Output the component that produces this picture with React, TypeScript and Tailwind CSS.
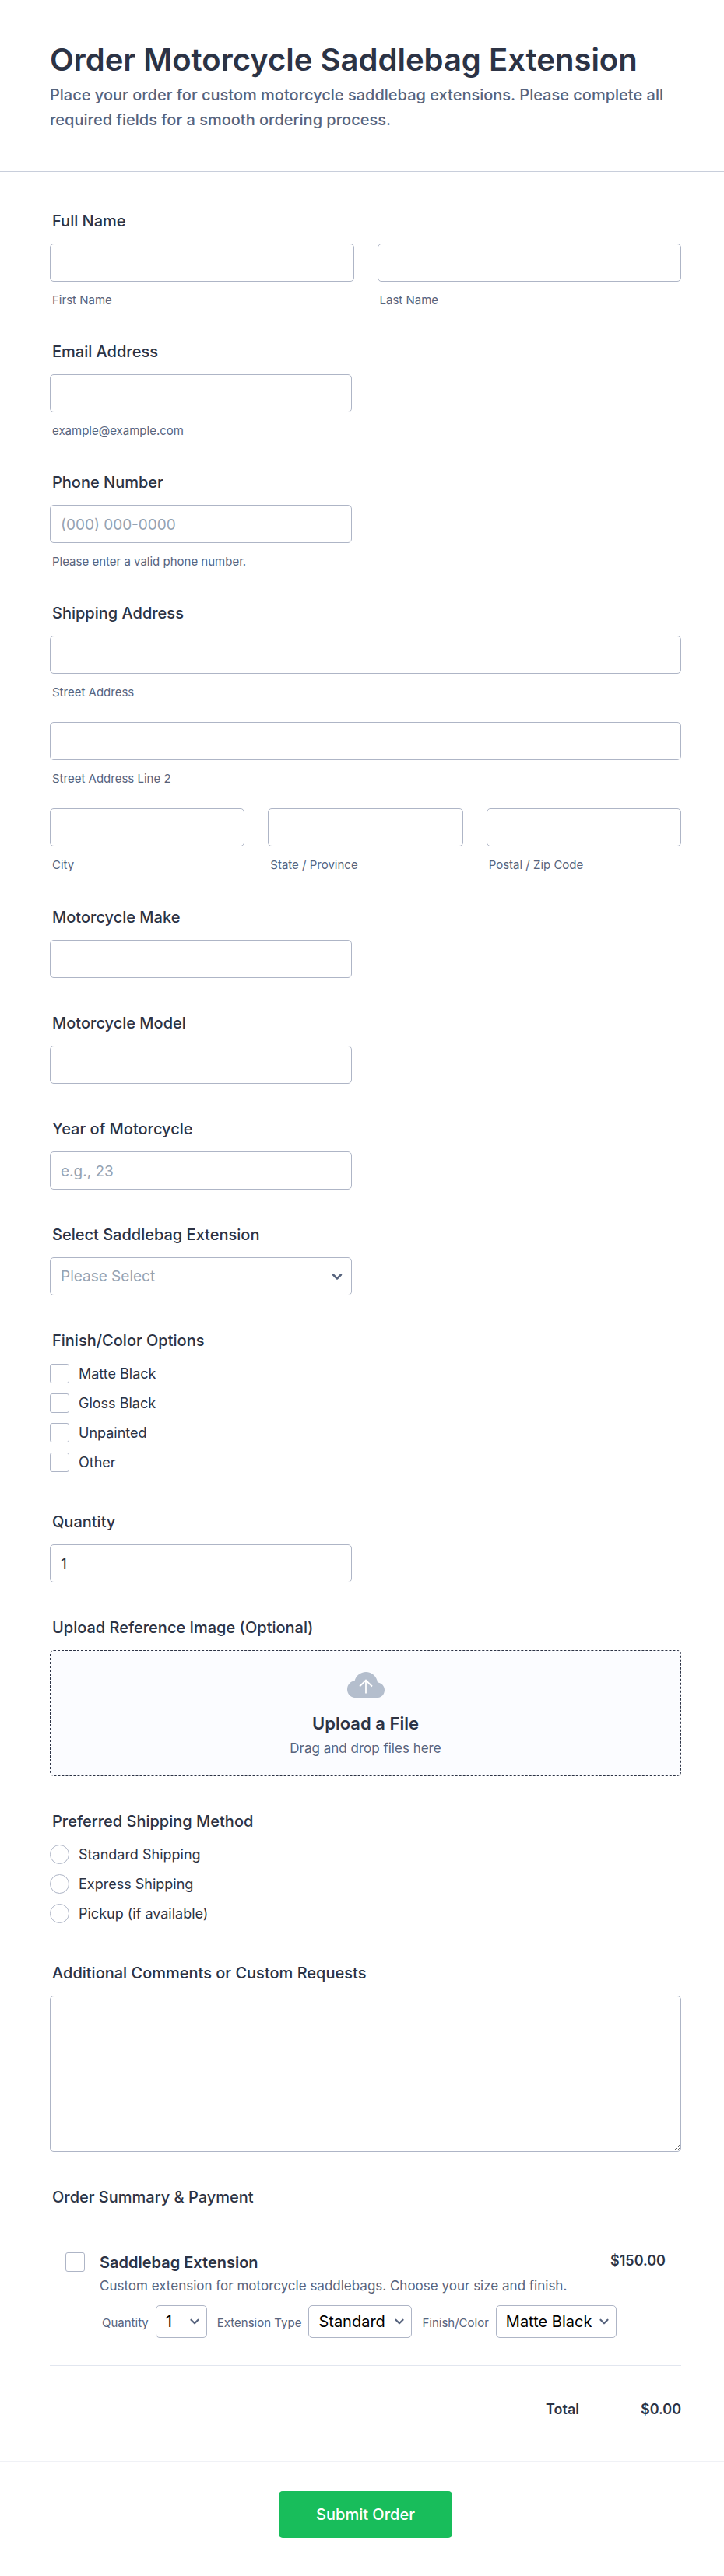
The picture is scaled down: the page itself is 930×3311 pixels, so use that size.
import React, { useState } from 'react';
import { ChevronDown } from 'lucide-react';

const FINISHES = ['Matte Black', 'Gloss Black', 'Unpainted', 'Other'];
const SHIPPING_METHODS = ['Standard Shipping', 'Express Shipping', 'Pickup (if available)'];
const UNIT_PRICE = 150;

const labelClass = 'block pl-[3px] text-[20px] leading-[25px] font-medium';
const subClass = 'mt-4 block pl-[3px] text-[15px] leading-4 text-[#57647e]';
const inputClass =
  'block h-[49px] w-full rounded-[5px] border border-[#aeb5c6] bg-white px-[13px] pt-px text-[19px] placeholder:text-[#95a3b3] outline-none focus:border-blue-500';
const boxClass = 'size-[25px] shrink-0 appearance-none border border-[#aeb5c6] bg-white checked:bg-blue-600';

type FieldProps = {
  id: string;
  label: string;
  sub?: string;
  children: React.ReactNode;
};

const Field: React.FC<FieldProps> = ({ id, label, sub, children }) => (
  <div className="flex flex-col">
    <label htmlFor={id} className={`${labelClass} mb-4`}>{label}</label>
    <div className="w-[388px] max-w-full">{children}</div>
    {sub && <p className={subClass}>{sub}</p>}
  </div>
);

const Group: React.FC<{ legend: string; children: React.ReactNode }> = ({ legend, children }) => (
  <fieldset>
    <legend className={`${labelClass} mb-4`}>{legend}</legend>
    {children}
  </fieldset>
);

const SubInput: React.FC<{ id: string; label: string }> = ({ id, label }) => (
  <div className="min-w-0 flex-1">
    <input id={id} name={id} type="text" className={inputClass} />
    <label htmlFor={id} className={subClass}>{label}</label>
  </div>
);

const ProductSelect: React.FC<{ id: string; label: string; options: string[]; width: string }> = ({ id, label, options, width }) => (
  <div className="flex items-center gap-[9px]">
    <label htmlFor={id} className="pt-1 text-[15px] leading-[18px] text-[#57647e]">{label}</label>
    <div className={`relative ${width}`}>
      <select id={id} name={id} className="block h-[42px] w-full appearance-none rounded-[5px] border border-[#aeb5c6] bg-white pl-3 text-[20px] text-black">
        {options.map(o => <option key={o}>{o}</option>)}
      </select>
      <ChevronDown className="pointer-events-none absolute top-3 right-[7px] size-[18px] text-[#57647e]" strokeWidth={3} />
    </div>
  </div>
);

const CloudIcon = () => (
  <svg width="48" height="33" viewBox="0 0 48 33" fill="none" aria-hidden="true">
    <path d="M9 33C4 32 0 28 0 22.500C0 16.500 4 12 9.500 11.500C11 5 17 0 24 0C31.500 0 38 5.500 39 13.500C44 14 48 18 48 23C48 28.500 44.500 32.500 39.500 33Z" fill="#b4becd" />
    <path d="M24 27.500V10.500M16 18.500L24 10.500L32 18.500" stroke="#fff" strokeWidth="1.800" />
  </svg>
);

const App: React.FC = () => {
  const [extension, setExtension] = useState('');
  const [inCart, setInCart] = useState(false);

  const total = inCart ? UNIT_PRICE : 0;

  return (
    <div className="min-h-screen bg-white font-['Inter','Liberation_Sans',sans-serif] text-[#2c3345]">
      <form onSubmit={e => e.preventDefault()}>
        <header className="border-b border-[#c8cedb] pt-[50px] pr-[55px] pb-[50px] pl-16">
          <h1 className="text-[40px] leading-[53px] font-semibold">Order Motorcycle Saddlebag Extension</h1>
          <p className="mt-[3px] text-[20px] leading-8 font-medium text-[#57647e]">
            Place your order for custom motorcycle saddlebag extensions. Please complete all required fields for a smooth ordering process.
          </p>
        </header>

        <div className="flex flex-col gap-[46px] pt-[51px] pr-[55px] pl-16">
          <Group legend="Full Name">
            <div className="flex gap-[30px]">
              <SubInput id="first-name" label="First Name" />
              <SubInput id="last-name" label="Last Name" />
            </div>
          </Group>

          <Field id="email" label="Email Address" sub="example@example.com">
            <input id="email" type="email" className={inputClass} />
          </Field>

          <Field id="phone" label="Phone Number" sub="Please enter a valid phone number.">
            <input id="phone" type="tel" placeholder="(000) 000-0000" className={inputClass} />
          </Field>

          <Group legend="Shipping Address">
            <div className="flex flex-col gap-[30px]">
              <SubInput id="street" label="Street Address" />
              <SubInput id="street-2" label="Street Address Line 2" />
              <div className="flex gap-[30px] pb-px">
                <SubInput id="city" label="City" />
                <SubInput id="state" label="State / Province" />
                <SubInput id="postal" label="Postal / Zip Code" />
              </div>
            </div>
          </Group>

          <Field id="make" label="Motorcycle Make">
            <input id="make" type="text" className={inputClass} />
          </Field>

          <Field id="model" label="Motorcycle Model">
            <input id="model" type="text" className={inputClass} />
          </Field>

          <Field id="year" label="Year of Motorcycle">
            <input id="year" type="text" placeholder="e.g., 23" className={inputClass} />
          </Field>

          <Field id="extension" label="Select Saddlebag Extension">
            <div className="relative">
              <select
                id="extension"
                value={extension}
                onChange={e => setExtension(e.target.value)}
                className={`${inputClass} appearance-none ${extension ? '' : 'text-[#95a3b3]'}`}
              >
                <option value="">Please Select</option>
                <option value="standard">Standard</option>
                <option value="extended">Extended</option>
              </select>
              <ChevronDown className="pointer-events-none absolute top-[15px] right-[9px] size-5 text-[#57647e]" strokeWidth={3} />
            </div>
          </Field>

          <Group legend="Finish/Color Options">
            <div className="flex flex-col gap-[13px] pt-px pb-[6px]">
              {FINISHES.map(finish => (
                <label key={finish} className="flex items-center gap-3 text-[18px] leading-[25px]">
                  <input type="checkbox" name="finish" value={finish} className={`${boxClass} rounded-[3px]`} />
                  {finish}
                </label>
              ))}
            </div>
          </Group>

          <Field id="quantity" label="Quantity">
            <input id="quantity" type="text" inputMode="numeric" defaultValue="1" className={inputClass} />
          </Field>

          <Group legend="Upload Reference Image (Optional)">
            <label className="flex cursor-pointer flex-col items-center rounded-[5px] border border-dashed border-[#2c3345] bg-[#fbfcff] pt-[27px] pb-[21px]">
              <CloudIcon />
              <span className="mt-[18px] text-[22px] leading-[30px] font-semibold">Upload a File</span>
              <span className="mt-[3px] text-[17px] leading-7 text-[#57647e]">Drag and drop files here</span>
              <input type="file" className="sr-only" />
            </label>
          </Group>

          <Group legend="Preferred Shipping Method">
            <div className="flex flex-col gap-[13px] pt-px pb-[6px]">
              {SHIPPING_METHODS.map(method => (
                <label key={method} className="flex items-center gap-3 text-[18px] leading-[25px]">
                  <input type="radio" name="shipping" value={method} className={`${boxClass} rounded-full`} />
                  {method}
                </label>
              ))}
            </div>
          </Group>

          <div>
            <label htmlFor="comments" className={`${labelClass} mb-4`}>Additional Comments or Custom Requests</label>
            <textarea
              id="comments"
              className="block h-[201px] w-full resize rounded-[5px] border border-[#aeb5c6] bg-white p-3 text-[19px] outline-none"
            />
          </div>

          <Group legend="Order Summary &amp; Payment">
            <div className="flex gap-[19px] border-b border-[#e2e6ef] pt-[42px] pr-5 pb-[35px] pl-5">
              <input
                id="product"
                type="checkbox"
                checked={inCart}
                onChange={e => setInCart(e.target.checked)}
                className={`${boxClass} rounded-[3px]`}
              />
              <div className="min-w-0 flex-1">
                <div className="flex justify-between font-semibold">
                  <label htmlFor="product" className="pt-px text-[20px] leading-[25px]">Saddlebag Extension</label>
                  <span className="text-[18px] leading-[22px]">$150.00</span>
                </div>
                <p className="mt-[3px] text-[17px] leading-7 text-[#57647e]">
                  Custom extension for motorcycle saddlebags. Choose your size and finish.
                </p>
                <div className="mt-[11px] flex flex-wrap gap-[13px] pl-[3px]">
                  <ProductSelect id="product-quantity" label="Quantity" options={['1', '2', '3', '4', '5']} width="w-[66px]" />
                  <ProductSelect id="product-type" label="Extension Type" options={['Standard', 'Extended']} width="w-[133px]" />
                  <ProductSelect id="product-finish" label="Finish/Color" options={FINISHES} width="w-[155px]" />
                </div>
              </div>
            </div>
            <div className="flex justify-end pt-[43px] pb-[54px] text-[18px] leading-[25px] font-semibold">
              <span>Total</span>
              <span className="w-[131px] text-right">${total.toFixed(2)}</span>
            </div>
          </Group>
        </div>

        <div className="flex justify-center border-t-2 border-[#f0f1f6] py-[37px] pr-[55px] pl-16">
          <button type="submit" className="h-[60px] min-w-[222px] rounded-[5px] bg-[#18bd5b] px-12 text-[20px] font-medium text-white">
            Submit Order
          </button>
        </div>
      </form>
    </div>
  );
};

export default App;
